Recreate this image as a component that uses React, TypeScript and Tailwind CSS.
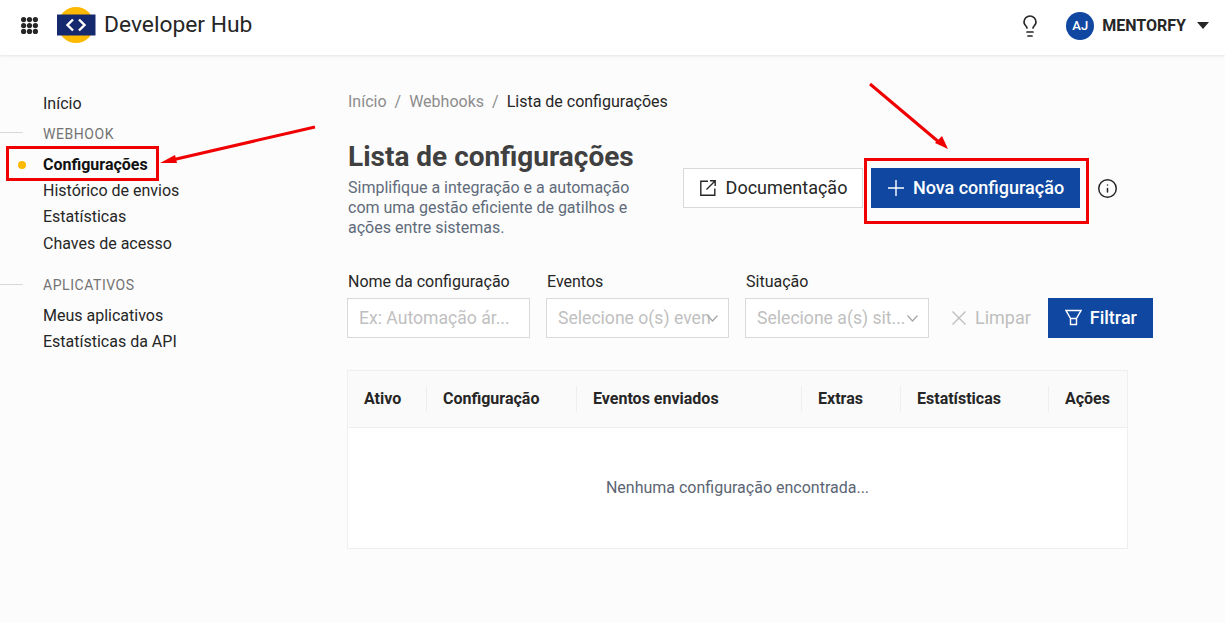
import { Info, Lightbulb } from 'lucide-react';

const COLUMNS = [
  { label: 'Ativo', width: 'w-[79px]' },
  { label: 'Configuração', width: 'w-[150px]' },
  { label: 'Eventos enviados', width: 'w-[225px]' },
  { label: 'Extras', width: 'w-[99px]' },
  { label: 'Estatísticas', width: 'w-[148px]' },
  { label: 'Ações', width: 'flex-1' },
];

function GridIcon() {
  return (
    <svg width="17" height="17" viewBox="0 0 17 17" fill="#262626">
      {[2.6, 8.5, 14.4].map(y =>
        [2.6, 8.5, 14.4].map(x => <circle key={`${x}-${y}`} cx={x} cy={y} r="2.6" />)
      )}
    </svg>
  );
}

function Logo() {
  return (
    <svg width="39" height="37" viewBox="0 0 39 37">
      <circle cx="19" cy="18" r="18" fill="#fdb900" />
      <rect x="0" y="7.5" width="38.5" height="21" fill="#152a6e" />
      <path d="M16 12.5 10.5 18l5.5 5.5M22 12.5l5.5 5.5-5.5 5.5" fill="none" stroke="#fff" strokeWidth="2.4" />
    </svg>
  );
}

function FilterField({ label, placeholder, width, chevron }: { label: string; placeholder: string; width: string; chevron?: boolean }) {
  return (
    <div className={`${width} shrink-0`}>
      <div className="h-[20px] pl-[1px] text-[16px] leading-[20px] text-[#262626] mb-[6px] whitespace-nowrap">{label}</div>
      <div className="relative h-[40px] border border-[#d9d9d9] bg-white pl-[11px] pr-[18px] flex items-center text-[17.6px] text-[#bfbfbf] overflow-hidden">
        <span className="whitespace-nowrap overflow-hidden">{placeholder}</span>
        {chevron && (
          <svg width="11" height="7" viewBox="0 0 11 7" fill="none" stroke="#a6a6a6" strokeWidth="1.2" className="absolute right-[10px] top-[16px]">
            <path d="M.5.5 5.5 6l5-5.5" />
          </svg>
        )}
      </div>
    </div>
  );
}

export default function App() {
  return (
    <div className="relative h-[623px] overflow-hidden bg-[#fcfcfc] font-['Roboto',sans-serif]">
      {/* Header */}
      <header className="h-[55px] bg-white shadow-[0_1px_3px_rgba(0,0,0,0.1)] flex items-center pl-[21px] pr-[16px] pb-[4px]">
        <GridIcon />
        <div className="ml-[19px]"><Logo /></div>
        <div className="ml-[8px] text-[22.8px] text-[#262626]">Developer Hub</div>
        <div className="ml-auto flex items-center">
          <Lightbulb size={24} strokeWidth={1.7} className="text-[#262626]" />
          <div className="ml-[24px] w-[28px] h-[28px] rounded-full bg-[#0f47a1] text-white text-[13px] font-medium flex items-center justify-center">AJ</div>
          <div className="ml-[8px] text-[16px] font-bold text-[#262626]">MENTORFY</div>
          <div className="ml-[11px] w-0 h-0 border-x-[6px] border-x-transparent border-t-[7px] border-t-[#262626]" />
        </div>
      </header>

      <div className="flex">
        {/* Sidebar */}
        <aside className="w-[347px] shrink-0 pt-[36px] text-[16px] text-[#262626]">
          <div className="pl-[43px] leading-[26px]">Início</div>
          <div className="flex items-center h-[26px] mt-[4px]">
            <div className="w-[23px] h-px bg-[#d9d9d9] mr-[20px] mb-[4px]" />
            <span className="text-[14px] tracking-[0.55px] text-[#737373]">WEBHOOK</span>
          </div>
          <div className="relative pl-[43px] leading-[26px] mt-[5px] font-bold text-[#111]">
            <span className="absolute left-[18px] top-[9px] w-[8px] h-[8px] rounded-full bg-[#fdb900]" />
            Configurações
          </div>
          <div className="pl-[43px] leading-[26px]">Histórico de envios</div>
          <div className="pl-[43px] leading-[26px]">Estatísticas</div>
          <div className="pl-[43px] leading-[27px]">Chaves de acesso</div>
          <div className="flex items-center h-[26px] mt-[15px]">
            <div className="w-[23px] h-px bg-[#d9d9d9] mr-[20px] mb-[2px]" />
            <span className="text-[14px] tracking-[0.55px] text-[#737373]">APLICATIVOS</span>
          </div>
          <div className="pl-[43px] leading-[26px] mt-[5px]">Meus aplicativos</div>
          <div className="pl-[43px] leading-[26px]">Estatísticas da API</div>
        </aside>

        {/* Main */}
        <main className="flex-1 pt-[36px]">
          <div className="flex items-center h-[22px] pl-[1px] text-[16px] text-[#8c8c8c]">
            <span>Início</span>
            <span className="mx-[8px]">/</span>
            <span>Webhooks</span>
            <span className="mx-[8px]">/</span>
            <span className="text-[#262626]">Lista de configurações</span>
          </div>

          <div className="flex mt-[27px]">
            <div className="w-[336px] shrink-0 pl-[1px]">
              <h1 className="text-[28px] leading-[34px] font-bold text-[#404040]">Lista de configurações</h1>
              <p className="mt-[4px] w-[300px] text-[16px] leading-[20px] text-[#5f6b7a]">
                Simplifique a integração e a automação com uma gestão eficiente de gatilhos e ações entre sistemas.
              </p>
            </div>
            <div className="flex items-center h-[40px] mt-[28px]">
              <button className="h-[40px] w-[180px] pl-[1px] pb-[1px] border border-[#d9d9d9] bg-white flex items-center justify-center text-[18px] text-[#262626]">
                <svg width="16" height="16" viewBox="0 0 16 16" fill="none" stroke="#262626" strokeWidth="1.4" className="mr-[10px]">
                  <path d="M8 1.2H.8v14h14V8.5M6.5 9.5 15 1M10 .8h5.2V6" />
                </svg>
                Documentação
              </button>
              <button className="ml-[8px] h-[40px] w-[209px] pl-[1px] pb-[1px] bg-[#0f47a1] flex items-center justify-center text-[18px] font-medium text-white">
                <svg width="16" height="16" viewBox="0 0 16 16" fill="none" stroke="#fff" strokeWidth="1.4" className="mr-[9px]">
                  <path d="M8 0v16M0 8h16" />
                </svg>
                Nova configuração
              </button>
              <Info size={21} strokeWidth={1.7} className="ml-[17px] text-[#262626]" />
            </div>
          </div>

          {/* Filters */}
          <div className="flex items-end mt-[34px]">
            <FilterField label="Nome da configuração" placeholder="Ex: Automação ár..." width="w-[183px]" />
            <div className="ml-[16px]">
              <FilterField label="Eventos" placeholder="Selecione o(s) evento(s)" width="w-[183px]" chevron />
            </div>
            <div className="ml-[16px]">
              <FilterField label="Situação" placeholder="Selecione a(s) sit..." width="w-[184px]" chevron />
            </div>
            <button className="ml-[23px] h-[40px] pb-[1px] flex items-center text-[18px] text-[#bfbfbf]">
              <svg width="14" height="14" viewBox="0 0 14 14" fill="none" stroke="#bfbfbf" strokeWidth="1.4" className="mr-[9px]">
                <path d="M.5.5l13 13M13.5.5l-13 13" />
              </svg>
              Limpar
            </button>
            <button className="ml-[17px] h-[40px] w-[105px] pl-[1px] pb-[1px] bg-[#0f47a1] flex items-center justify-center text-[18px] font-medium text-white">
              <svg width="17" height="17" viewBox="0 0 17 17" fill="none" stroke="#fff" strokeWidth="1.4" className="mr-[8px]">
                <path d="M1 1.5h15l-4.5 8v6h-6v-6zM5.5 9.5h6" />
              </svg>
              Filtrar
            </button>
          </div>

          {/* Table */}
          <div className="mt-[32px] w-[781px] border border-[#efefef] bg-white">
            <div className="flex items-center h-[57px] bg-[#fafafa] border-b border-[#efefef]">
              {COLUMNS.map((col, i) => (
                <div
                  key={col.label}
                  className={`${col.width} h-[26px] pl-[16px] flex items-center text-[16px] font-bold text-[#262626] ${i < COLUMNS.length - 1 ? 'border-r border-[#efefef]' : ''}`}
                >
                  {col.label}
                </div>
              ))}
            </div>
            <div className="h-[120px] flex items-center justify-center text-[16px] text-[#5b6573]">
              Nenhuma configuração encontrada...
            </div>
          </div>
        </main>
      </div>

      {/* Annotations */}
      <div className="absolute left-[6px] top-[146px] w-[153px] h-[35px] border-[3px] border-[#f00000]" />
      <div className="absolute left-[864px] top-[158px] w-[225px] h-[66px] border-[3px] border-[#f00000]" />
      <svg className="absolute left-0 top-0 pointer-events-none" width="1225" height="623">
        <path d="M315 127 172 160" stroke="#f00000" strokeWidth="3" fill="none" />
        <path d="M160 163 175 155 177 163Z" fill="#f00000" />
        <path d="M870 84 940 143" stroke="#f00000" strokeWidth="3" fill="none" />
        <path d="M948 149 935 143 942 136Z" fill="#f00000" />
      </svg>
    </div>
  );
}
